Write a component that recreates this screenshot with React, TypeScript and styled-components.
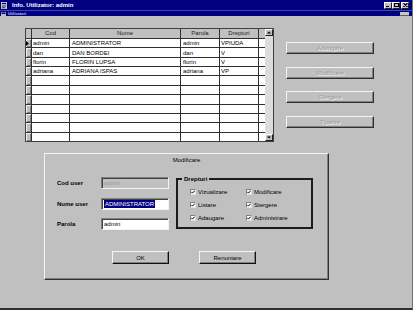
import React from 'react';
import styled, { createGlobalStyle } from 'styled-components';

const Global = createGlobalStyle`
  html, body { margin: 0; padding: 0; background: #c0c0c0; }
  body { font-family: "Liberation Sans", Arial, sans-serif; }
  * { box-sizing: border-box; }
`;

const FONT = `"Liberation Sans", Arial, sans-serif`;

const Window = styled.div`
  width: 413px;
  height: 310px;
  display: flex;
  flex-direction: column;
  background: #c0c0c0;
  overflow: hidden;
  border-bottom: 2px solid #303030;
  border-right: 1px solid #707070;
`;

const TitleBar = styled.div`
  height: 10px;
  flex: none;
  background: #000080;
  display: flex;
  align-items: center;
  padding: 0 3px 0 1px;
`;

const TitleText = styled.span`
  color: #fff;
  font: bold 6px/8px ${FONT};
  margin-left: 5px;
  white-space: nowrap;
`;

const Controls = styled.div`
  margin-left: auto;
  display: flex;
  align-items: center;
`;

const CtlButton = styled.div<{ $gap?: number }>`
  width: 8px;
  height: 7px;
  background: #c0c0c0;
  border: 1px solid;
  border-color: #fff #202020 #202020 #fff;
  display: flex;
  align-items: center;
  justify-content: center;
  margin-left: ${(p) => p.$gap ?? 0}px;
`;

const ChildBar = styled.div`
  height: 6px;
  flex: none;
  background: #000080;
  border-top: 1px solid #3a48a8;
  display: flex;
  align-items: center;
  padding: 0 3px 0 1px;
`;

const ChildText = styled.span`
  color: #b8c0e8;
  font: bold 4px/5px ${FONT};
  margin-left: 2px;
  white-space: nowrap;
`;

const ChildButton = styled.div`
  margin-left: auto;
  width: 9px;
  height: 4px;
  background: #c8c8c8;
  border-bottom: 1px solid #606060;
`;

const Body = styled.div`
  flex: 1;
  padding: 12px 0 0 25px;
  display: flex;
  flex-direction: column;
`;

const TopRow = styled.div`
  display: flex;
  align-items: flex-start;
`;

const GridFrame = styled.div`
  display: flex;
  width: 249px;
  height: 114px;
  border: 1px solid #404040;
  background: #fff;
`;

const Table = styled.div`
  display: grid;
  grid-template-columns: 5px 37px 110px 38px 38px 6px;
  grid-template-rows: 9px repeat(11, 1fr);
  gap: 1px;
  background: #303030;
  height: 100%;
`;

const HeadCell = styled.div`
  background: #c0c0c0;
  color: #202020;
  font: 6px/9px ${FONT};
  text-align: center;
  white-space: nowrap;
  overflow: hidden;
`;

const Indicator = styled.div`
  background: #c0c0c0;
  box-shadow: inset 1px 1px #f0f0f0, inset -1px -1px #808080;
  display: flex;
  align-items: center;
  justify-content: flex-start;
`;

const Cell = styled.div<{ $pad?: number }>`
  background: #fff;
  color: #000;
  font: 6px/8px ${FONT};
  display: flex;
  align-items: center;
  padding-left: ${(p) => p.$pad ?? 1}px;
  white-space: nowrap;
  overflow: hidden;
`;

const ScrollBar = styled.div`
  width: 8px;
  display: flex;
  flex-direction: column;
  justify-content: space-between;
  background: #dcdcdc;
`;

const ScrollBtn = styled.div`
  width: 8px;
  height: 7px;
  background: #c0c0c0;
  border: 1px solid;
  border-color: #fff #202020 #202020 #fff;
  display: flex;
  align-items: center;
  justify-content: center;
`;

const SideButtons = styled.div`
  margin: 14px 0 0 12px;
  display: flex;
  flex-direction: column;
  gap: 12.5px;
`;

const DisabledButton = styled.div`
  width: 88px;
  height: 12px;
  background: #c0c0c0;
  border: 1px solid;
  border-color: #f4f4f4 #303030 #303030 #f4f4f4;
  box-shadow: inset -1px -1px #808080;
  display: flex;
  align-items: center;
  justify-content: center;
  font: 6px/8px ${FONT};
  color: #9a9a9a;
  text-shadow: 1px 1px #f4f4f4;
`;

const Panel = styled.div`
  margin: 11px 0 0 19px;
  width: 285px;
  height: 127px;
  border: 1px solid;
  border-color: #f4f4f4 #303030 #303030 #f4f4f4;
  box-shadow: inset -1px -1px #808080;
  display: flex;
  flex-direction: column;
`;

const PanelTitle = styled.div`
  padding-top: 2px;
  font: 6px/8px ${FONT};
  color: #000;
  text-align: center;
`;

const PanelRow = styled.div`
  display: flex;
  align-items: flex-start;
  padding-left: 12px;
`;

const Form = styled.div`
  margin-top: 13px;
  display: grid;
  grid-template-columns: 44px 68px;
  grid-auto-rows: 12px;
  row-gap: 8.5px;
  align-items: center;
`;

const Label = styled.div`
  font: bold 6px/8px ${FONT};
  color: #000;
`;

const Input = styled.div<{ $disabled?: boolean }>`
  height: 12px;
  border: 1px solid;
  border-color: #808080 #f4f4f4 #f4f4f4 #808080;
  box-shadow: inset 1px 1px #404040;
  background: ${(p) => (p.$disabled ? '#c0c0c0' : '#fff')};
  color: ${(p) => (p.$disabled ? '#9a9a9a' : '#000')};
  font: 6px/8px ${FONT};
  display: flex;
  align-items: center;
  padding-left: 2px;
  white-space: nowrap;
`;

const Selected = styled.span`
  background: #000080;
  color: #fff;
  padding: 0 1px;
`;

const Group = styled.fieldset`
  margin: 11px 0 0 7px;
  width: 137px;
  height: 54px;
  border: 2px solid #1c1c1c;
  padding: 5px 0 0 12px;
  min-width: 0;
`;

const Legend = styled.legend`
  font: bold 6px/8px ${FONT};
  color: #000;
  padding: 0 2px;
  margin-left: -8px;
`;

const Checks = styled.div`
  display: grid;
  grid-template-columns: 56px 60px;
  grid-auto-rows: 8px;
  row-gap: 5px;
`;

const CheckItem = styled.div`
  display: flex;
  align-items: center;
  gap: 2px;
  font: 6px/8px ${FONT};
  color: #000;
  white-space: nowrap;
`;

const Box = styled.span`
  width: 6px;
  height: 6px;
  background: #fff;
  border: 1px solid;
  border-color: #808080 #e0e0e0 #e0e0e0 #808080;
  display: flex;
  align-items: center;
  justify-content: center;
`;

const ButtonRow = styled.div`
  margin-top: 21px;
  padding-left: 67px;
  display: flex;
  gap: 30px;
`;

const PushButton = styled.div`
  width: 57px;
  height: 13px;
  background: #c0c0c0;
  border: 1px solid;
  border-color: #f4f4f4 #101010 #101010 #f4f4f4;
  box-shadow: inset -1px -1px #808080;
  display: flex;
  align-items: center;
  justify-content: center;
  font: 6px/8px ${FONT};
  color: #000;
`;

const rows: string[][] = [
  ['admin', 'ADMINISTRATOR', 'admin', 'VPIUDA'],
  ['dan', 'DAN BORDEI', 'dan', 'V'],
  ['florin', 'FLORIN LUPSA', 'florin', 'V'],
  ['adriana', 'ADRIANA ISPAS', 'adriana', 'VP'],
];
while (rows.length < 11) rows.push(['', '', '', '']);

const checks = [
  'Vizualizare',
  'Modificare',
  'Listare',
  'Stergere',
  'Adaugare',
  'Administrare',
];

const Check = () => (
  <svg width="4" height="4" viewBox="0 0 4 4">
    <path d="M0.3 1.8 L1.5 3.1 L3.7 0.6" stroke="#000" strokeWidth="1" fill="none" />
  </svg>
);

export default function App() {
  return (
    <>
      <Global />
      <Window>
        <TitleBar>
          <svg width="6" height="7" viewBox="0 0 6 7">
            <rect x="0" y="0" width="6" height="7" fill="#c0c0c0" />
            <rect x="0.5" y="0.5" width="5" height="2" fill="#000080" stroke="#fff" strokeWidth="0.5" />
            <rect x="1" y="3.5" width="4" height="1" fill="#404040" />
            <rect x="1" y="5.2" width="3" height="1" fill="#404040" />
          </svg>
          <TitleText>Info. Utilizator: admin</TitleText>
          <Controls>
            <CtlButton>
              <svg width="4" height="4" viewBox="0 0 4 4">
                <rect x="0" y="3" width="3" height="1" fill="#000" />
              </svg>
            </CtlButton>
            <CtlButton>
              <svg width="5" height="4" viewBox="0 0 5 4">
                <rect x="0.5" y="0.5" width="4" height="3" fill="none" stroke="#000" strokeWidth="1" />
              </svg>
            </CtlButton>
            <CtlButton $gap={1}>
              <svg width="5" height="4" viewBox="0 0 5 4">
                <path d="M0.5 0 L4.5 4 M4.5 0 L0.5 4" stroke="#000" strokeWidth="1.1" />
              </svg>
            </CtlButton>
          </Controls>
        </TitleBar>
        <ChildBar>
          <svg width="5" height="4" viewBox="0 0 5 4">
            <rect x="0" y="0" width="5" height="4" fill="#c0c0c0" />
            <rect x="0.5" y="0.5" width="4" height="1.5" fill="#000080" />
          </svg>
          <ChildText>Utilizatori</ChildText>
          <ChildButton />
        </ChildBar>
        <Body>
          <TopRow>
            <GridFrame>
              <Table>
                <HeadCell />
                <HeadCell>Cod</HeadCell>
                <HeadCell>Nume</HeadCell>
                <HeadCell>Parola</HeadCell>
                <HeadCell>Drepturi</HeadCell>
                <HeadCell />
                {rows.map((r, i) => (
                  <React.Fragment key={i}>
                    <Indicator>
                      {i === 0 && (
                        <svg width="3" height="5" viewBox="0 0 3 5">
                          <path d="M0 0 L3 2.5 L0 5 Z" fill="#000" />
                        </svg>
                      )}
                    </Indicator>
                    <Cell $pad={1}>{r[0]}</Cell>
                    <Cell $pad={2}>{r[1]}</Cell>
                    <Cell $pad={2}>{r[2]}</Cell>
                    <Cell $pad={1}>{r[3]}</Cell>
                    <Cell />
                  </React.Fragment>
                ))}
              </Table>
              <ScrollBar>
                <ScrollBtn>
                  <svg width="4" height="3" viewBox="0 0 4 3">
                    <path d="M0 2.5 L2 0.5 L4 2.5 Z" fill="#000" />
                  </svg>
                </ScrollBtn>
                <ScrollBtn>
                  <svg width="4" height="3" viewBox="0 0 4 3">
                    <path d="M0 0.5 L2 2.5 L4 0.5 Z" fill="#000" />
                  </svg>
                </ScrollBtn>
              </ScrollBar>
            </GridFrame>
            <SideButtons>
              <DisabledButton>Adaugare</DisabledButton>
              <DisabledButton>Modificare</DisabledButton>
              <DisabledButton>Stergere</DisabledButton>
              <DisabledButton>Tiparire</DisabledButton>
            </SideButtons>
          </TopRow>
          <Panel>
            <PanelTitle>Modificare</PanelTitle>
            <PanelRow>
              <Form>
                <Label>Cod user</Label>
                <Input $disabled>admin</Input>
                <Label>Nume user</Label>
                <Input>
                  <Selected>ADMINISTRATOR</Selected>
                </Input>
                <Label>Parola</Label>
                <Input>admin</Input>
              </Form>
              <Group>
                <Legend>Drepturi</Legend>
                <Checks>
                  {checks.map((c) => (
                    <CheckItem key={c}>
                      <Box>
                        <Check />
                      </Box>
                      {c}
                    </CheckItem>
                  ))}
                </Checks>
              </Group>
            </PanelRow>
            <ButtonRow>
              <PushButton>OK</PushButton>
              <PushButton>Renuntare</PushButton>
            </ButtonRow>
          </Panel>
        </Body>
      </Window>
    </>
  );
}
